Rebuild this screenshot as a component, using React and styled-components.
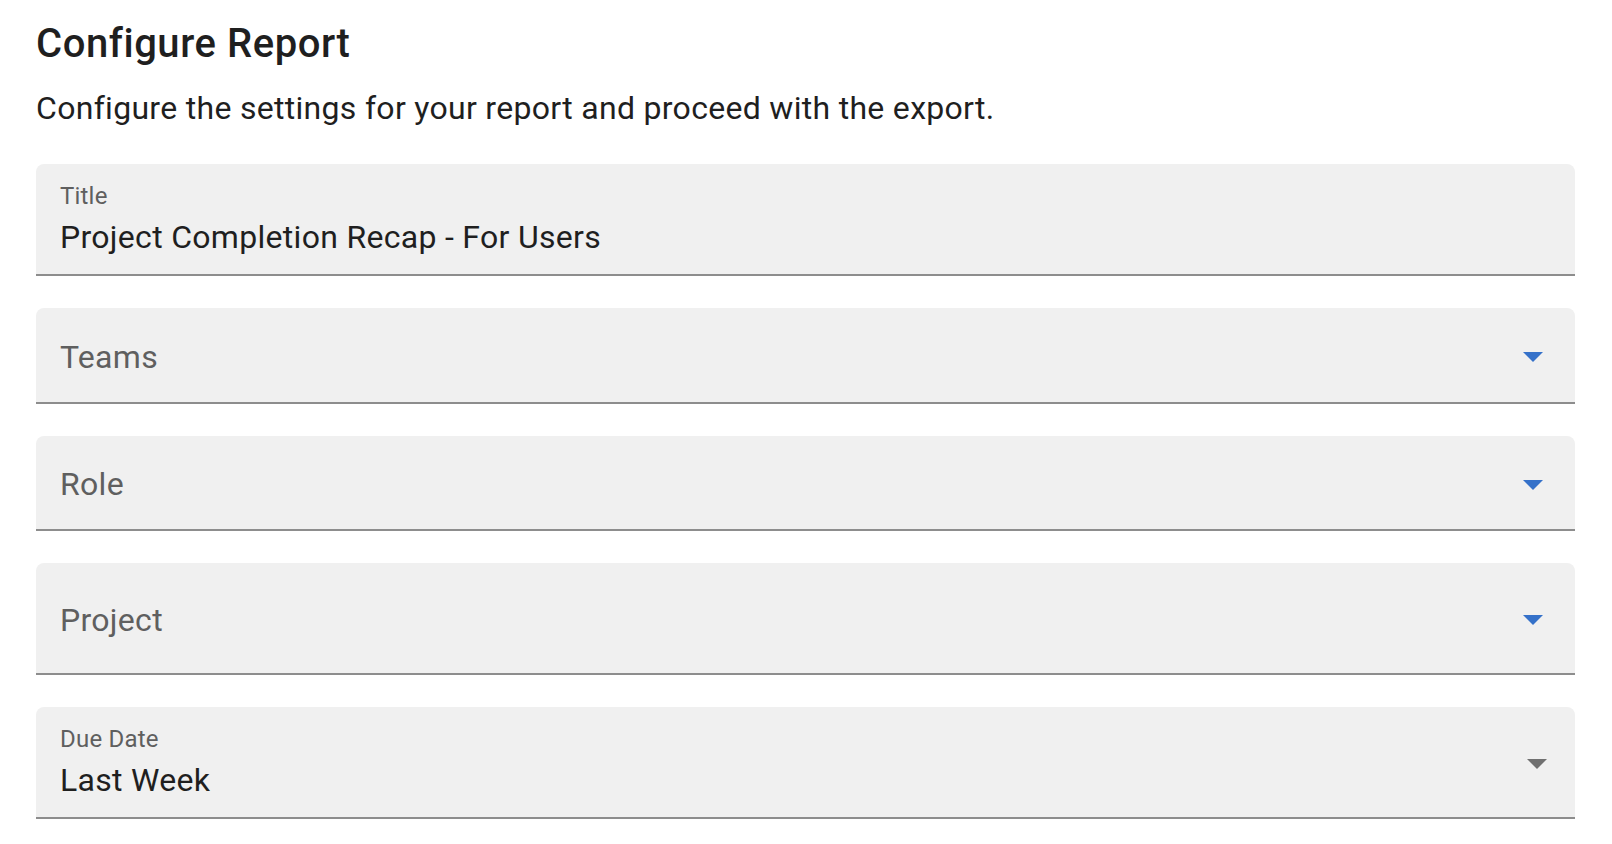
import React from 'react'
import styled, { createGlobalStyle } from 'styled-components'

const GlobalStyle = createGlobalStyle`
    html, body {
        margin: 0;
        padding: 0;
        background: #ffffff;
    }

    body {
        font-family: Roboto, "Liberation Sans", Arial, sans-serif;
        -webkit-font-smoothing: antialiased;
    }
`;

const fields = [
    { id: 'title', label: 'Title', value: 'Project Completion Recap - For Users', height: 112 },
    { id: 'teams', label: 'Teams', height: 96, arrow: 'blue' },
    { id: 'role', label: 'Role', height: 95, arrow: 'blue' },
    { id: 'project', label: 'Project', height: 112, arrow: 'blue' },
    { id: 'due', label: 'Due Date', value: 'Last Week', height: 112, arrow: 'grey' },
];

function DropArrow({ tone }) {
    return (
        <ArrowIcon $tone={tone} viewBox="0 0 24 24" aria-hidden="true">
            <path d="M7 10l5 5 5-5z" />
        </ArrowIcon>
    )
}

function Field({ label, value, height, arrow }) {
    return (
        <FieldBox $height={height} $arrow={arrow}>
            {value ? (
                <FilledText>
                    <SmallLabel>{label}</SmallLabel>
                    <Value>{value}</Value>
                </FilledText>
            ) : (
                <EmptyText>{label}</EmptyText>
            )}
            {arrow && <DropArrow tone={arrow} />}
        </FieldBox>
    )
}

function App() {
    return (
        <Page>
            <GlobalStyle />
            <Heading>Configure Report</Heading>
            <Intro>Configure the settings for your report and proceed with the export.</Intro>
            <Form>
                {fields.map((f) => (
                    <Field key={f.id} {...f} />
                ))}
            </Form>
        </Page>
    )
}

const Page = styled.div`
    padding: 12px 37px 0 36px;
    color: #1f1f1f;
`;

const Heading = styled.h2`
    margin: 0 0 8px;
    font-size: 40px;
    font-weight: 500;
    line-height: 64px;
    letter-spacing: 0.55px;
    color: #1f1f1f;
`;

const Intro = styled.p`
    margin: 0 0 32px;
    font-size: 32px;
    line-height: 48px;
    letter-spacing: 0.3px;
    color: #1f1f1f;
`;

const Form = styled.div`
    display: flex;
    flex-direction: column;
    gap: 32px;
`;

const FieldBox = styled.div`
    box-sizing: border-box;
    height: ${(p) => p.$height}px;
    display: flex;
    align-items: center;
    padding: 0 ${(p) => (p.$arrow === 'blue' ? 18 : 14)}px 0 24px;
    background: #f0f0f0;
    border-bottom: 2px solid #8d8d8d;
    border-radius: 8px 8px 0 0;
`;

const FilledText = styled.div`
    flex: 1;
    align-self: stretch;
    display: flex;
    flex-direction: column;
    padding-top: 15px;
    min-width: 0;
`;

const SmallLabel = styled.span`
    font-size: 24px;
    line-height: 34px;
    letter-spacing: 0.2px;
    color: #5f5f5f;
`;

const Value = styled.span`
    margin-top: 1px;
    font-size: 32px;
    line-height: 46px;
    letter-spacing: 0.3px;
    color: #1f1f1f;
`;

const EmptyText = styled.span`
    flex: 1;
    margin-top: 3px;
    font-size: 32px;
    line-height: 46px;
    letter-spacing: 0.3px;
    color: #5f5f5f;
`;

const ArrowIcon = styled.svg`
    width: 48px;
    height: 48px;
    flex-shrink: 0;
    fill: ${(p) => (p.$tone === 'blue' ? '#3571c9' : '#707070')};
    margin-top: 2px;
`;

export default App
